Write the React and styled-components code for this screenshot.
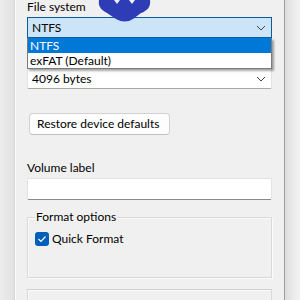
import React from 'react'
import styled, { createGlobalStyle } from 'styled-components'

const Global = createGlobalStyle`
  html, body {
    margin: 0;
    padding: 0;
    width: 300px;
    height: 300px;
    overflow: hidden;
    background: #f0f0f0;
  }
  body {
    font-family: "Segoe UI", Lato, "Noto Sans", sans-serif;
    font-size: 12px;
    color: #000;
  }
`;

const Window = styled.div`
  position: relative;
  display: flex;
  width: 300px;
  height: 300px;
  overflow: hidden;
`;

const LeftEdge = styled.div`
  width: 14px;
  flex-shrink: 0;
  background: linear-gradient(90deg, #ececec, #e2e2e2);
  border-right: 1px solid #d6d6d6;
  box-shadow: 1px 0 0 #fafafa;
`;

const RightEdge = styled.div`
  width: 15px;
  flex-shrink: 0;
  background: linear-gradient(90deg, #dcdcdc, #ececec 60%, #f2f2f2);
  border-left: 1px solid #9c9c9c;
`;

const Main = styled.div`
  flex: 1;
  padding: 0 12px;
  display: flex;
  flex-direction: column;
`;

const Label = styled.div`
  height: 13px;
  line-height: 13px;
  margin-top: ${p => p.$top || 0}px;
  white-space: nowrap;
`;

const Spacer = styled.div`
  height: ${p => p.$h}px;
  flex-shrink: 0;
`;

const ComboWrap = styled.div`
  position: relative;
  margin-top: ${p => p.$top || 0}px;
`;

const Combo = styled.div`
  height: 21px;
  box-sizing: border-box;
  display: flex;
  align-items: center;
  justify-content: space-between;
  padding: 0 5px 0 4px;
  background: ${p => (p.$open ? '#cce4f7' : '#ffffff')};
  border: 1px solid ${p => (p.$open ? '#0a5d99' : '#e3e3e3')};
  border-bottom-color: ${p => (p.$open ? '#0a5d99' : '#a8a8a8')};
  border-radius: ${p => (p.$open ? '0' : '2px')};
`;

const Chevron = () => (
  <svg width="10" height="6" viewBox="0 0 10 6">
    <path d="M1 1 L5 5 L9 1" fill="none" stroke="#444" strokeWidth="1" />
  </svg>
);

const List = styled.div`
  position: absolute;
  top: 100%;
  left: 0;
  right: 0;
  z-index: 2;
  background: #fff;
  border: 1px solid #7a7a7a;
  border-top: none;
  box-shadow: 2px 2px 2px rgba(0, 0, 0, 0.35);
`;

const Option = styled.div`
  height: 15px;
  line-height: 15px;
  padding-left: 2px;
  background: ${p => (p.$selected ? '#0078d7' : '#fff')};
  color: ${p => (p.$selected ? '#fff' : '#000')};
`;

const Button = styled.div`
  align-self: flex-start;
  margin: 24px 0 0 2px;
  height: 22px;
  width: 141px;
  box-sizing: border-box;
  border: 1px solid #d0d0d0;
  border-bottom-color: #c0c0c0;
  border-radius: 4px;
  background: #fdfdfd;
  padding-left: 7px;
  line-height: 20px;
  white-space: nowrap;
`;

const Input = styled.div`
  margin-top: 4px;
  height: 22px;
  flex-shrink: 0;
  box-sizing: border-box;
  background: #fff;
  border: 1px solid #e3e3e3;
  border-bottom: 1px solid #8a8a8a;
  border-radius: 2px;
`;

const Group = styled.fieldset`
  margin: 10px 0 0 0;
  padding: 4px 7px 0 7px;
  height: 68px;
  flex-shrink: 0;
  box-sizing: border-box;
  border: 1px solid #d9d9d9;
  box-shadow: inset 1px 1px 0 #fbfbfb, 1px 1px 0 #fbfbfb;
  min-width: 0;
`;

const Legend = styled.legend`
  padding: 0 1px;
  margin-left: 0;
  line-height: 14px;
`;

const CheckRow = styled.div`
  display: flex;
  align-items: center;
  gap: 3px;
  margin-top: 3px;
`;

const CheckBox = styled.div`
  width: 14px;
  height: 14px;
  border-radius: 3px;
  background: #005fb8;
  display: flex;
  align-items: center;
  justify-content: center;
`;

const LowerBox = styled.div`
  margin-top: 11px;
  height: 30px;
  flex-shrink: 0;
  border: 1px solid #d9d9d9;
  border-top-color: #cfcfcf;
  box-shadow: inset 1px 1px 0 #fbfbfb;
`;

const Scribble = styled.svg`
  position: absolute;
  left: 0;
  top: 0;
  pointer-events: none;
  z-index: 3;
`;

export default function App() {
  return (
    <Window>
      <Global />
      <LeftEdge />
      <Main>
        <Label>File system</Label>
        <ComboWrap $top={4}>
          <Combo $open>
            <span>NTFS</span>
            <Chevron />
          </Combo>
          <List>
            <Option $selected>NTFS</Option>
            <Option>exFAT (Default)</Option>
          </List>
        </ComboWrap>
        <Spacer $h={30} />
        <ComboWrap>
          <Combo>
            <span>4096 bytes</span>
            <Chevron />
          </Combo>
        </ComboWrap>
        <Button>Restore device defaults</Button>
        <Label $top={26}>Volume label</Label>
        <Input />
        <Group>
          <Legend>Format options</Legend>
          <CheckRow>
            <CheckBox>
              <svg width="10" height="8" viewBox="0 0 10 8">
                <path d="M1.5 4 L4 6.5 L8.5 1.5" fill="none" stroke="#fff" strokeWidth="1.2" />
              </svg>
            </CheckBox>
            <span>Quick Format</span>
          </CheckRow>
        </Group>
        <LowerBox />
      </Main>
      <RightEdge />
      <Scribble width="300" height="30" viewBox="0 0 300 30">
        <path
          d="M99 0 H114 L117 4 L120 0 H129 L132 4 L135 0 H150 C151 7 147 11 141 13 L133 19 Q125 24 116 19 L107 13 C101 10 98 6 99 0 Z"
          fill="#2e3db5"
        />
      </Scribble>
    </Window>
  );
}
